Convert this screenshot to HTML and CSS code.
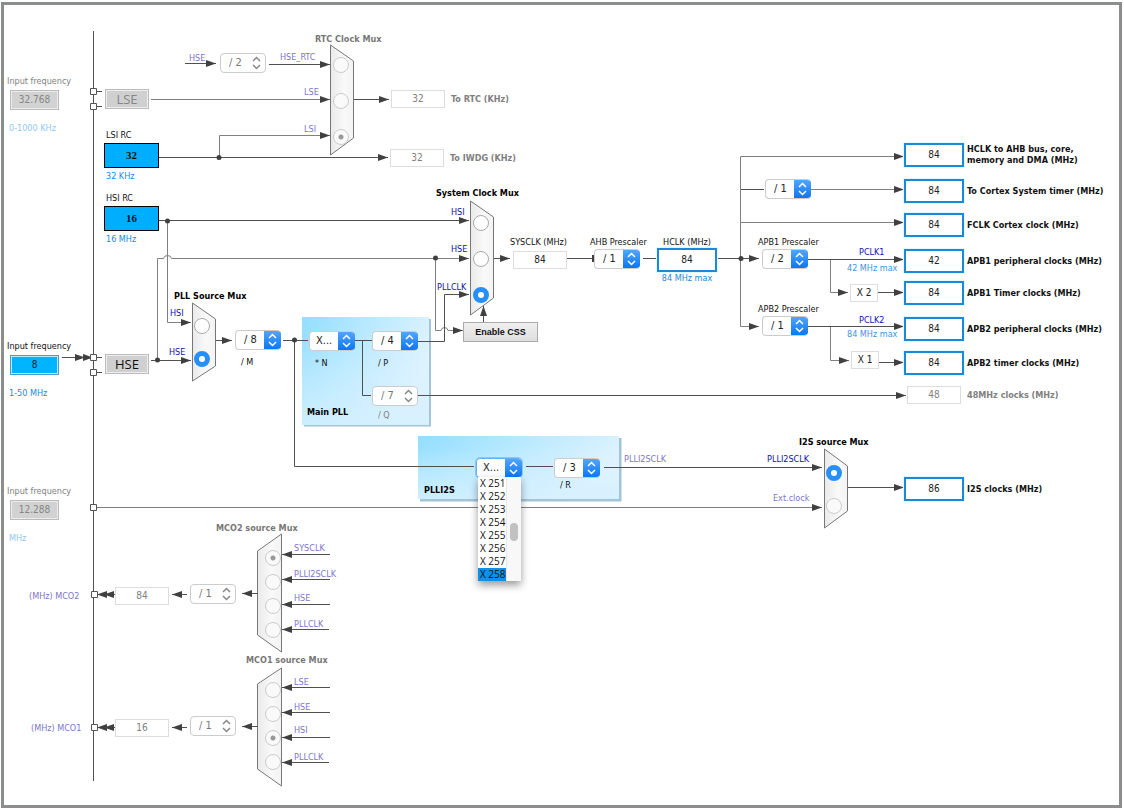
FILE: index.html
```html
<!DOCTYPE html>
<html lang="en">
<head>
<meta charset="utf-8">
<title>Clock Configuration</title>
<link rel="stylesheet" href="styles.css">
</head>
<body>
<main class="canvas">
<svg class="wiring" width="1120" height="800" viewBox="0 0 1120 800">
  <defs>
    <linearGradient id="mux" x1="0" x2="1" y1="0" y2="0"><stop offset="0" stop-color="#eaeaea"/><stop offset="0.6" stop-color="#f9f9f9"/><stop offset="1" stop-color="#f3f3f3"/></linearGradient>
    <linearGradient id="pll" x1="0" x2="1" y1="0" y2="0.4"><stop offset="0" stop-color="#93deff"/><stop offset="0.5" stop-color="#baeaff"/><stop offset="1" stop-color="#e2f3ff"/></linearGradient>
    <linearGradient id="fade" x1="0" x2="0" y1="0" y2="1"><stop offset="0.2" stop-color="#d4f0ff" stop-opacity="0"/><stop offset="1" stop-color="#d4f0ff" stop-opacity="0.8"/></linearGradient>
    <marker id="arrow" viewBox="0 0 10 8" refX="10" refY="4" markerWidth="10" markerHeight="8" markerUnits="userSpaceOnUse" orient="auto"><path d="M0 .5 10 4 0 7.5z" fill="#404040"/></marker>
  </defs>

  <g class="panels">
    <path class="panel-edge" d="M304 425H429.500V319M420 500H620V438"/>
    <rect x="302" y="317" width="127" height="108" fill="url(#pll)"/><rect x="302" y="317" width="127" height="108" fill="url(#fade)"/>
    <rect x="418" y="436" width="201" height="63" fill="url(#pll)"/><rect x="418" y="436" width="201" height="63" fill="url(#fade)"/>
  </g>

  <g class="muxes" fill="url(#mux)">
    <path d="M330.500 45 353.500 61V138L330.500 155z"/>
    <path d="M470.500 201 493.500 217V298L470.500 315z"/>
    <path d="M192.500 303 215.500 319V366L192.500 381z"/>
    <path d="M824.500 449 847.500 466V511L824.500 528z"/>
    <path d="M281.500 534 257.500 551V635L281.500 652z"/>
    <path d="M281.500 668 257.500 684V769L281.500 786z"/>
  </g>

  <g class="wires">
    <path d="M93.500 31V781M96 91.500h6M96 106.500h6M96 357.500h6M96 372.500h6M643 258.500h14M567 258.500h27M717 258.500h24M741 189.500h23M283 340.500h25M355 340.500h17M526 466.500h27"/>
    <path d="M294.500 340V466.500H474"/>
    <path d="M151 99.500h179" class="soft arrow"/>
    <path d="M185 63.500h31" class="arrow"/>
    <path d="M269 64.500h61" class="arrow"/>
    <path d="M354 99.500h35" class="arrow"/>
    <path d="M219.500 157V135.500H330" class="soft arrow"/>
    <path d="M159 157.500h229" class="arrow"/>
    <path d="M159 220.500h310" class="arrow"/>
    <path d="M167.500 221V322.500H191" class="soft arrow"/>
    <path d="M151 360.500h40" class="arrow"/>
    <path d="M157.500 360V258.500H163.500Q164 255.500 167.500 255.500T171.500 258.500H469" class="soft arrow"/>
    <path d="M435.500 258V330.500H441Q441.500 327.500 444.500 327.500T448 330.500H463" class="soft arrow"/>
    <path d="M418 341.500H444.500V294.500H469" class="arrow"/>
    <path d="M483.500 322V306" class="arrow"/>
    <path d="M494 258.500h16" class="arrow"/>
    <path d="M741 258.500h18" class="arrow"/>
    <path d="M740.500 258V156.500H904" class="soft arrow"/>
    <path d="M811 189.500h93" class="soft arrow"/>
    <path d="M741 222.500h163" class="soft arrow"/>
    <path d="M740.500 258V326.500H759" class="soft arrow"/>
    <path d="M808 259.500h96" class="arrow"/>
    <path d="M830.500 260V292.500H848" class="soft arrow"/>
    <path d="M878 292.500h26" class="arrow"/>
    <path d="M808 326.500h96" class="arrow"/>
    <path d="M830.500 327V360.500H849" class="soft arrow"/>
    <path d="M879 362.500h25" class="arrow"/>
    <path d="M216 340.500h16" class="arrow"/>
    <path d="M362.500 341V395.500H371"/>
    <path d="M418 395.500h488" class="arrow"/>
    <path d="M604 467.500h218" class="arrow"/>
    <path d="M96 507.500h726" class="soft arrow"/>
    <path d="M848 487.500h56" class="arrow"/>
    <path d="M62 357.500h23" class="arrow"/>
    <path d="M82 357.500h11" class="arrow"/>
    <path d="M116 594.500H104" class="arrow"/><path d="M106 594.500H97" class="arrow"/>
    <path d="M187 594.500H172" class="arrow"/><path d="M258 593.500H242" class="arrow"/>
    <path d="M116 727.500H104" class="arrow"/><path d="M106 727.500H97" class="arrow"/>
    <path d="M187 727.500H172" class="arrow"/><path d="M258 726.500H242" class="arrow"/>
    <path d="M330 554.500H282" class="arrow"/><path d="M330 579.500H282" class="arrow"/><path d="M330 604.500H282" class="arrow"/><path d="M329 629.500H282" class="arrow"/>
    <path d="M330 687.500H282" class="arrow"/><path d="M330 712.500H282" class="arrow"/><path d="M330 737.500H282" class="arrow"/><path d="M329 762.500H282" class="arrow"/>
  </g>

  <g class="pins">
    <path d="M90.500 88.500h6v6h-6zM90.500 103.500h6v6h-6zM90.500 354.500h6v6h-6zM90.500 369.500h6v6h-6zM90.500 504.500h6v6h-6zM91.500 591.500h6v6h-6zM91.500 724.500h6v6h-6z"/>
  </g>
  <g class="dots">
    <circle cx="219" cy="157.500" r="2.500"/><circle cx="167.500" cy="221" r="2.500"/><circle cx="157.500" cy="360" r="2.500"/><circle cx="435.500" cy="258" r="2.500"/><circle cx="741" cy="258.500" r="2.500"/><circle cx="294.500" cy="340" r="2.500"/><rect x="592" y="255" width="3" height="7"/>
  </g>

  <g class="signal dim">
    <text x="189" y="61">HSE</text><text x="280" y="60">HSE_RTC</text><text x="304" y="95">LSE</text><text x="304" y="132">LSI</text>
    <text x="624" y="462">PLLI2SCLK</text><text x="773" y="501">Ext.clock</text>
    <text x="294" y="551">SYSCLK</text><text x="294" y="577">PLLI2SCLK</text><text x="294" y="601">HSE</text><text x="294" y="627">PLLCLK</text>
    <text x="294" y="685">LSE</text><text x="294" y="710">HSE</text><text x="294" y="733">HSI</text><text x="294" y="760">PLLCLK</text>
    <text x="29" y="599">(MHz) MCO2</text><text x="31" y="731">(MHz) MCO1</text>
  </g>
  <g class="signal">
    <text x="451" y="215">HSI</text><text x="451" y="252">HSE</text><text x="437" y="290">PLLCLK</text>
    <text x="170" y="316">HSI</text><text x="169" y="355">HSE</text>
    <text x="859" y="255">PCLK1</text><text x="859" y="323">PCLK2</text><text x="767" y="462">PLLI2SCLK</text>
  </g>
  <g class="title">
    <text x="436" y="196">System Clock Mux</text><text x="174" y="299">PLL Source Mux</text><text x="307" y="415">Main PLL</text><text x="424" y="493">PLLI2S</text><text x="799" y="445">I2S source Mux</text>
  </g>
  <g class="title muted">
    <text x="315" y="42">RTC Clock Mux</text><text x="216" y="531">MCO2 source Mux</text><text x="246" y="663">MCO1 source Mux</text>
  </g>
  <g class="hint">
    <text x="847" y="271">42 MHz max</text><text x="847" y="337">84 MHz max</text>
  </g>
</svg>

<div class="node pin-lse stack muted"><label for="lse-in">Input frequency</label><input id="lse-in" class="source" value="32.768" disabled><span class="hint">0-1000 KHz</span></div>
<div class="node pin-hse stack"><label for="hse-in">Input frequency</label><input id="hse-in" class="source live" value="8"><span class="hint">1-50 MHz</span></div>
<div class="node pin-i2s stack muted"><label for="i2s-in">Input frequency</label><input id="i2s-in" class="source" value="12.288" disabled><span class="hint">MHz</span></div>
<button class="node osc osc-lse" disabled>LSE</button>
<button class="node osc osc-hse">HSE</button>
<div class="node rc rc-lsi"><label for="lsi">LSI RC</label><input id="lsi" value="32" readonly><span class="hint">32 KHz</span></div>
<div class="node rc rc-hsi"><label for="hsi">HSI RC</label><input id="hsi" value="16" readonly><span class="hint">16 MHz</span></div>

<div class="node mux mux-rtc" role="radiogroup" aria-label="RTC Clock Mux"><input type="radio" name="rtc" aria-label="HSE_RTC" disabled><input type="radio" name="rtc" aria-label="LSE" disabled><input type="radio" name="rtc" aria-label="LSI" checked disabled></div>
<div class="node mux mux-sys" role="radiogroup" aria-label="System Clock Mux"><input type="radio" name="sys" aria-label="HSI"><input type="radio" name="sys" aria-label="HSE"><input type="radio" name="sys" aria-label="PLLCLK" checked></div>
<div class="node mux pair mux-pll" role="radiogroup" aria-label="PLL Source Mux"><input type="radio" name="pll" aria-label="HSI"><input type="radio" name="pll" aria-label="HSE" checked></div>
<div class="node mux pair mux-i2s" role="radiogroup" aria-label="I2S source Mux"><input type="radio" name="i2s" aria-label="PLLI2SCLK" checked><input type="radio" name="i2s" aria-label="Ext.clock" disabled></div>
<div class="node mux quad mux-mco2" role="radiogroup" aria-label="MCO2 source Mux"><input type="radio" name="m2" aria-label="SYSCLK" checked disabled><input type="radio" name="m2" aria-label="PLLI2SCLK" disabled><input type="radio" name="m2" aria-label="HSE" disabled><input type="radio" name="m2" aria-label="PLLCLK" disabled></div>
<div class="node mux quad mux-mco1" role="radiogroup" aria-label="MCO1 source Mux"><input type="radio" name="m1" aria-label="LSE" disabled><input type="radio" name="m1" aria-label="HSE" disabled><input type="radio" name="m1" aria-label="HSI" checked disabled><input type="radio" name="m1" aria-label="PLLCLK" disabled></div>

<div class="node pick rtc-div off"><select aria-label="HSE_RTC divider" disabled><option>/ 2</option></select><svg viewBox="0 0 17 20"><path d="M5 8 8.500 4.500 12 8M5 12 8.500 15.500 12 12"/></svg></div>
<div class="node pick mco2-div off"><select aria-label="MCO2 divider" disabled><option>/ 1</option></select><svg viewBox="0 0 17 20"><path d="M5 8 8.500 4.500 12 8M5 12 8.500 15.500 12 12"/></svg></div>
<div class="node pick mco1-div off"><select aria-label="MCO1 divider" disabled><option>/ 1</option></select><svg viewBox="0 0 17 20"><path d="M5 8 8.500 4.500 12 8M5 12 8.500 15.500 12 12"/></svg></div>
<div class="node under pll-m"><div class="pick"><select id="pm"><option>/ 8</option></select><svg viewBox="0 0 17 20"><path d="M5 8 8.500 4.500 12 8M5 12 8.500 15.500 12 12"/></svg></div><label for="pm">/ M</label></div>
<div class="node under pll-n"><div class="pick wide-value"><select id="pn"><option>X...</option></select><svg viewBox="0 0 17 20"><path d="M5 8 8.500 4.500 12 8M5 12 8.500 15.500 12 12"/></svg></div><label for="pn">* N</label></div>
<div class="node under pll-p"><div class="pick"><select id="pp"><option>/ 4</option></select><svg viewBox="0 0 17 20"><path d="M5 8 8.500 4.500 12 8M5 12 8.500 15.500 12 12"/></svg></div><label for="pp">/ P</label></div>
<div class="node under pll-q muted"><div class="pick off"><select id="pq" disabled><option>/ 7</option></select><svg viewBox="0 0 17 20"><path d="M5 8 8.500 4.500 12 8M5 12 8.500 15.500 12 12"/></svg></div><label for="pq">/ Q</label></div>
<div class="node under i2s-r"><div class="pick"><select id="ir"><option>/ 3</option></select><svg viewBox="0 0 17 20"><path d="M5 8 8.500 4.500 12 8M5 12 8.500 15.500 12 12"/></svg></div><label for="ir">/ R</label></div>
<div class="node pick focus wide-value i2s-n"><select aria-label="PLLI2S N multiplier"><option>X...</option></select><svg viewBox="0 0 17 20"><path d="M5 8 8.500 4.500 12 8M5 12 8.500 15.500 12 12"/></svg></div>
<div class="node menu"><ul role="listbox" aria-label="PLLI2S N values"><li role="option">X 251</li><li role="option">X 252</li><li role="option">X 253</li><li role="option">X 254</li><li role="option">X 255</li><li role="option">X 256</li><li role="option">X 257</li><li role="option" aria-selected="true">X 258</li></ul><div class="track"><div class="thumb"></div></div></div>

<div class="node over ahb"><label for="ahb">AHB Prescaler</label><div class="pick"><select id="ahb"><option>/ 1</option></select><svg viewBox="0 0 17 20"><path d="M5 8 8.500 4.500 12 8M5 12 8.500 15.500 12 12"/></svg></div></div>
<div class="node over apb1"><label for="apb1">APB1 Prescaler</label><div class="pick"><select id="apb1"><option>/ 2</option></select><svg viewBox="0 0 17 20"><path d="M5 8 8.500 4.500 12 8M5 12 8.500 15.500 12 12"/></svg></div></div>
<div class="node over apb2"><label for="apb2">APB2 Prescaler</label><div class="pick"><select id="apb2"><option>/ 1</option></select><svg viewBox="0 0 17 20"><path d="M5 8 8.500 4.500 12 8M5 12 8.500 15.500 12 12"/></svg></div></div>
<div class="node pick cortex"><select aria-label="Cortex System timer prescaler"><option>/ 1</option></select><svg viewBox="0 0 17 20"><path d="M5 8 8.500 4.500 12 8M5 12 8.500 15.500 12 12"/></svg></div>
<button class="node css-btn">Enable CSS</button>

<div class="node sysclk center"><label for="sysclk">SYSCLK (MHz)</label><input id="sysclk" class="value" value="84" readonly></div>
<div class="node hclk center"><label for="hclk">HCLK (MHz)</label><input id="hclk" class="value key" value="84"><span class="hint">84 MHz max</span></div>
<input class="node value factor x2" aria-label="APB1 timer multiplier" value="X 2" readonly>
<input class="node value factor x1" aria-label="APB2 timer multiplier" value="X 1" readonly>
<input class="node value mco2" aria-label="(MHz) MCO2" value="84" disabled>
<input class="node value mco1" aria-label="(MHz) MCO1" value="16" disabled>

<div class="node out to-rtc muted"><input id="o1" class="value" value="32" disabled><label for="o1">To RTC (KHz)</label></div>
<div class="node out to-iwdg muted"><input id="o2" class="value" value="32" disabled><label for="o2">To IWDG (KHz)</label></div>
<div class="node out ahb-bus"><input id="o3" class="value key" value="84"><label for="o3">HCLK to AHB bus, core,<br>memory and DMA (MHz)</label></div>
<div class="node out systick"><input id="o4" class="value key" value="84"><label for="o4">To Cortex System timer (MHz)</label></div>
<div class="node out fclk"><input id="o5" class="value key" value="84"><label for="o5">FCLK Cortex clock (MHz)</label></div>
<div class="node out apb1-p"><input id="o6" class="value key" value="42"><label for="o6">APB1 peripheral clocks (MHz)</label></div>
<div class="node out apb1-t"><input id="o7" class="value key" value="84"><label for="o7">APB1 Timer clocks (MHz)</label></div>
<div class="node out apb2-p"><input id="o8" class="value key" value="84"><label for="o8">APB2 peripheral clocks (MHz)</label></div>
<div class="node out apb2-t"><input id="o9" class="value key" value="84"><label for="o9">APB2 timer clocks (MHz)</label></div>
<div class="node out clk48 muted"><input id="o10" class="value" value="48" disabled><label for="o10">48MHz clocks (MHz)</label></div>
<div class="node out i2s-out"><input id="o11" class="value key" value="86"><label for="o11">I2S clocks (MHz)</label></div>
</main>
</body>
</html>
```

FILE: styles.css
```css
*{box-sizing:border-box}
body{margin:0;background:#fff;color:#111;font:9px/12px "DejaVu Sans Condensed","DejaVu Sans",sans-serif}
input,select,button{margin:0;padding:0;font:inherit;color:inherit;border-radius:0}
label,.hint{white-space:nowrap}

.canvas{position:relative;min-height:100vh;overflow:hidden}
.canvas::before{content:"";position:absolute;inset:2px 2px 1px 1px;border:3px solid #8c8e8d;pointer-events:none}
.wiring{display:block;position:relative}
.node{position:absolute}

.wires path{fill:none;stroke:#505050}
.wires .soft{stroke:#808080}
.arrow{marker-end:url(#arrow)}
.muxes path{stroke:#777}
.panel-edge{fill:none;stroke:#a4c4da;stroke-width:3}
.pins path{fill:#fff;stroke:#555}
.dots{fill:#404040}
.signal{fill:#1010b0}
.signal.dim{fill:#7d75cb}
.title{font-weight:bold;fill:#000}
.title.muted{fill:#777}
.hint{color:#2288e0;fill:#3d95df}

.muted{color:#808080}
.muted .hint{color:#90c8f8}

.stack{display:flex;flex-direction:column;align-items:flex-start}
.source{width:49px;height:20px;margin:3px 0 12px 3px;padding-bottom:1px;border:1px solid #bbb;outline:1px solid #ececec;outline-offset:-2px;background:#d2d2d2;text-align:center;font-size:10px;color:#858585}
.source.live{background:#00b4ff;border-color:#4a9cc4;outline-color:#b8ecff;color:#102030}
.stack .hint{margin-left:2px}
.pin-lse{left:7px;top:75px}
.pin-hse{left:7px;top:340px}
.pin-i2s{left:7px;top:485px}

.osc{width:44px;height:20px;border:1px solid #bbb;outline:1px solid #eee;outline-offset:-2px;background:#d0d0d0;color:#111;font:13px/16px "Open Sans","Noto Sans",sans-serif}
.osc:disabled{color:#858585}
.osc-lse{left:105px;top:89px}
.osc-hse{left:105px;top:354px}

.rc{display:flex;flex-direction:column;gap:2px}
.rc input{width:55px;height:25px;padding-bottom:2px;border:1px solid #000;background:#00aeff;text-align:center;font:bold 11px/14px "Liberation Serif",serif}
.rc label,.rc .hint{padding-left:2px}
.rc-lsi{left:104px;top:129px}
.rc-hsi{left:104px;top:192px}

.mux{display:flex;flex-direction:column;gap:20px}
.mux.pair{gap:17px}
.mux.quad{gap:8px}
.mux input{appearance:none;width:16px;height:16px;border:1px solid #aaa;border-radius:50%;background:#fff}
.mux input:checked{border:5px solid #2790f8}
.mux input:disabled{border:1px solid #ccc;background:#fafafa}
.mux input:disabled:checked{background:radial-gradient(circle,#999 2px,#fafafa 3px)}
.mux-rtc{left:333px;top:57px}
.mux-sys{left:473px;top:215px}
.mux-pll{left:194px;top:318px}
.mux-i2s{left:826px;top:465px}
.mux-mco2{left:265px;top:550px}
.mux-mco1{left:265px;top:682px}

.pick{display:flex;width:46px;height:20px;border-radius:4px;overflow:hidden;background:#fff;border:1px solid #ccc;border-right-width:0}
.pick select{appearance:none;flex:1;min-width:0;border:0;padding-left:8px;background:transparent;color:#222;font-size:11px;line-height:18px;outline:0;opacity:1}
.pick svg{width:17px;height:20px;margin:-1px 0;fill:none;stroke:#fff;stroke-width:1.5;background:linear-gradient(#56a8fa,#0874f4)}
.pick.off{border-right-width:1px;background:#fffffff0}
.pick.off select{color:#777}
.pick.off svg{background:none;stroke:#888}
.pick.wide-value select{padding-left:6px}
.pick.focus{border-color:#6ab0f0;outline:1px solid #8cc4f4}
.rtc-div{left:220px;top:53px}
.mco2-div{left:190px;top:584px}
.mco1-div{left:190px;top:716px}
.i2s-n{left:476px;top:458px}
.cortex{left:765px;top:179px}
.under{display:flex;flex-direction:column;gap:6px}
.under label{padding-left:6px}
.pll-m{left:235px;top:330px}
.pll-n{left:309px;top:331px}
.pll-p{left:372px;top:331px}
.pll-q{left:372px;top:386px}
.under.pll-q{gap:3px}
.i2s-r{left:554px;top:458px}
.under.i2s-r{gap:1px}
.over{display:flex;flex-direction:column;gap:1px}
.over label{margin-left:-4px}
.ahb{left:594px;top:236px}
.apb1{left:762px;top:236px}
.apb2{left:762px;top:303px}

.menu{left:478px;top:477px;display:flex;background:#fff;box-shadow:0 4px 8px #0006}
.menu ul{margin:0;padding:0;list-style:none;font:10px/13px "Open Sans","Noto Sans",sans-serif}
.menu li{width:28px;padding-left:2px;white-space:nowrap}
.menu li[aria-selected]{background:#0c90e8}
.track{width:15px;background:#f8f8f8;border-left:1px solid #e8e8e8;padding:46px 3px 0}
.thumb{height:18px;border-radius:4px;background:#c1c1c1}

.css-btn{left:463px;top:322px;width:75px;height:20px;border:1px solid #aaa;background:linear-gradient(#f0f0f0,#dedede);font:bold 9px/16px "Liberation Sans Narrow","Liberation Sans",sans-serif}

.value{width:54px;height:18px;padding-bottom:2px;border:1px solid #ddd;background:#fff;color:#222;text-align:center;font-size:10px}
.value:disabled{color:#808080}
.value.key{width:60px;height:24px;border:2px solid #1b88d8;outline:1px solid #e0faff}
.value.factor{width:28px}
.x2{left:850px;top:284px}
.x1{left:851px;top:351px}
.mco2{left:115px;top:587px}
.mco1{left:115px;top:719px}
.center{display:flex;flex-direction:column;align-items:center}
.sysclk{left:510px;top:236px;gap:3px}
.sysclk .value{align-self:flex-end}
.hclk{left:657px;top:236px}

.out{display:flex;align-items:center;gap:3px;font-weight:bold}
.out .value{font-weight:normal}
.out .value:disabled + label{padding-left:3px}
.out label{line-height:11px}
.to-rtc{left:391px;top:90px}
.to-iwdg{left:390px;top:149px}
.ahb-bus{left:904px;top:143px}
.systick{left:904px;top:179px}
.fclk{left:904px;top:213px}
.apb1-p{left:904px;top:249px}
.apb1-t{left:904px;top:281px}
.apb2-p{left:904px;top:317px}
.apb2-t{left:904px;top:351px}
.clk48{left:907px;top:386px}
.i2s-out{left:904px;top:477px}
```
